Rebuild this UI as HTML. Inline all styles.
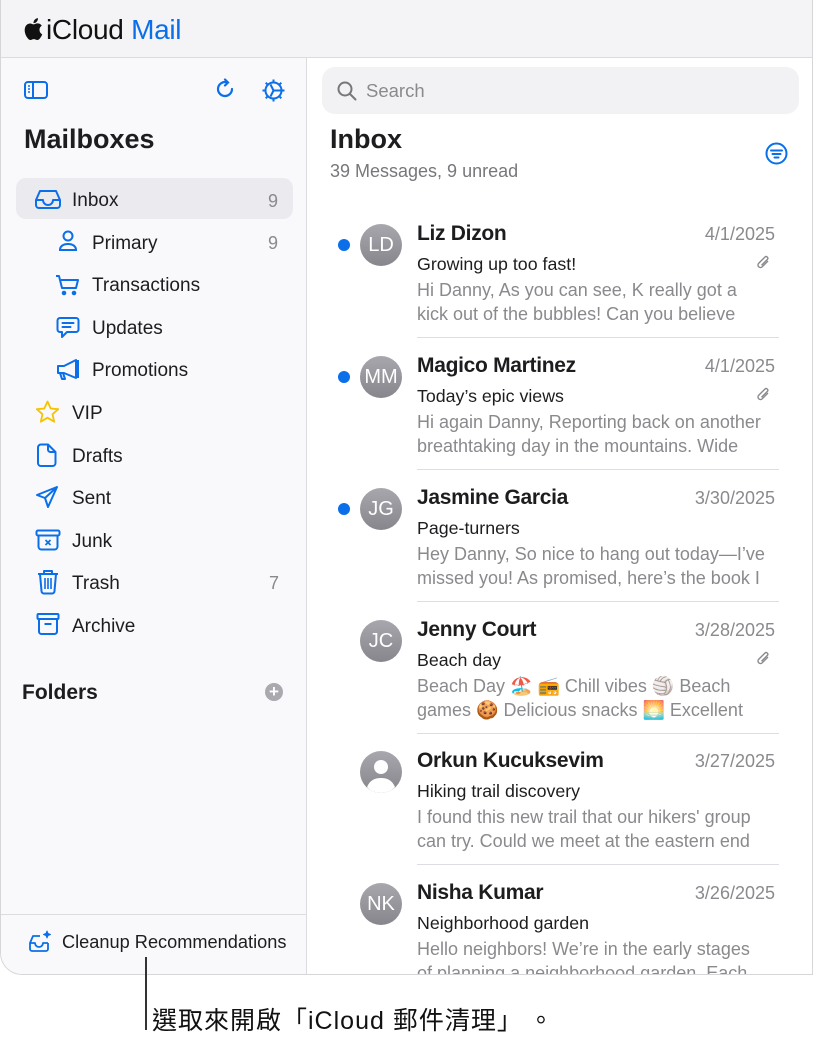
<!DOCTYPE html>
<html><head><meta charset="utf-8"><style>
*{margin:0;padding:0;box-sizing:border-box}
body{width:817px;height:1045px;background:#fff;font-family:"Liberation Sans","Noto Sans CJK TC",sans-serif;position:relative;overflow:hidden;color:#1d1d1f}
.a{position:absolute;white-space:nowrap}
.win{position:absolute;left:0;top:0;width:813px;height:975px;border:1px solid #d6d6d9;border-top:none;border-radius:0 0 0 22px;overflow:hidden;background:#fff}
.hdr{position:absolute;left:0;top:0;width:813px;height:58px;background:#f4f4f6;border-bottom:1px solid #dcdce0}
.side{position:absolute;left:0;top:58px;width:306px;height:917px;background:#f9f9fb;border-right:1px solid #dcdce0}
.si{font-size:19px;color:#1d1d1f}
.cnt{font-size:18px;color:#8a8a8e}
.nm{font-size:21px;font-weight:bold;color:#1d1d1f;letter-spacing:-0.3px}
.dt{font-size:18px;color:#8a8a8e}
.sb{font-size:17.8px;color:#1d1d1f}
.pv{font-size:18px;color:#8a8a8e;line-height:24px}
.av{position:absolute;width:42px;height:42px;border-radius:50%;background:linear-gradient(#a7a7ad,#86868c);color:#fff;font-size:20px;text-align:center;line-height:42px}
.dot{position:absolute;width:12px;height:12px;border-radius:50%;background:#0a6fe8}
.sep{position:absolute;left:416px;width:362px;height:1px;background:#dedee2}
svg{position:absolute}
</style></head><body>
<div class="win">
<div class="hdr"></div>
<svg style="left:22px;top:17px" width="20" height="24" viewBox="0 0 20 24"><path d="M16.5 12.7c0-2.7 2.2-4 2.3-4.1-1.3-1.9-3.300-2.100-4-2.200-1.700-.2-3.300 1-4.200 1-.9 0-2.200-1-3.600-.9C5.200 6.500 3.500 7.600 2.600 9.200.7 12.600 2.100 17.600 4 20.300c.9 1.300 2 2.800 3.400 2.700 1.400-.1 1.900-.9 3.500-.9s2.100.9 3.500.9c1.500 0 2.400-1.300 3.300-2.700 1-1.500 1.500-3 1.500-3.100-.1 0-2.700-1.100-2.700-4.500zM13.800 4.600c.8-.9 1.300-2.200 1.100-3.500-1.100.1-2.400.7-3.200 1.700-.7.800-1.300 2.100-1.200 3.300 1.300.1 2.500-.6 3.300-1.500z" fill="#111"/></svg>
<div class="a" style="left:45px;top:14px;font-size:28px;letter-spacing:-0.3px"><span style="color:#111">iCloud</span> <span style="color:#0a6fe8">Mail</span></div>

<div class="side"></div>
<svg style="left:23px;top:80px" width="24" height="20" viewBox="0 0 24 20" fill="none" stroke="#0a6fe8" stroke-width="2"><rect x="1" y="2" width="22" height="16" rx="3"/><line x1="9" y1="2" x2="9" y2="18"/><path d="M4 6h2M4 9h2M4 12h2" stroke-width="1.5"/></svg>
<svg style="left:213px;top:78px" width="24" height="24" viewBox="0 0 24 24" fill="none" stroke="#0a6fe8" stroke-width="2.2" stroke-linecap="round"><path d="M18 11a7 7 0 1 1-5-6.700"/><path d="M11 1.500l3 3-3 3"/></svg>
<svg style="left:260px;top:78px" width="25" height="25" viewBox="0 0 25 25" fill="none" stroke="#0a6fe8" stroke-width="2"><circle cx="12.500" cy="12.500" r="8"/><path d="M12.500 1.500v3M12.500 20.500v3M1.500 12.500h3M20.500 12.500h3M4.700 4.700l2.100 2.100M18.200 18.200l2.100 2.100M4.700 20.300l2.100-2.100M18.200 6.800l2.100-2.100"/><path d="M9.500 6.500l3 6h8M12.500 12.500l-3 6"/></svg>
<div class="a" style="left:23px;top:124px;font-size:27px;font-weight:bold">Mailboxes</div>
<div class="a" style="left:15px;top:178px;width:277px;height:41px;background:#ebebef;border-radius:10px"></div>
<svg style="left:34px;top:189px" width="26" height="20" viewBox="0 0 26 20" fill="none" stroke="#0a6fe8" stroke-width="2" stroke-linejoin="round"><path d="M1 11l4-9h16l4 9v5a3 3 0 0 1-3 3H4a3 3 0 0 1-3-3z"/><path d="M1 11h7a5 5 0 0 0 10 0h7"/></svg>
<div class="a si" style="left:71px;top:190px">Inbox</div><div class="a cnt" style="left:267px;top:191px">9</div>
<svg style="left:57px;top:230px" width="20" height="22" viewBox="0 0 20 22" fill="none" stroke="#0a6fe8" stroke-width="2"><circle cx="10" cy="6" r="4.500"/><path d="M2 20c0-4 3.500-6 8-6s8 2 8 6z"/></svg>
<div class="a si" style="left:91px;top:233px">Primary</div><div class="a cnt" style="left:267px;top:233px">9</div>
<svg style="left:54px;top:274px" width="25" height="22" viewBox="0 0 25 22" fill="none" stroke="#0a6fe8" stroke-width="2" stroke-linejoin="round"><path d="M1 2h3l3 12h14l2-8H6"/><circle cx="9" cy="19" r="1.300" fill="#0a6fe8"/><circle cx="19" cy="19" r="1.300" fill="#0a6fe8"/></svg>
<div class="a si" style="left:91px;top:275px">Transactions</div>
<svg style="left:55px;top:316px" width="24" height="23" viewBox="0 0 24 23" fill="none" stroke="#0a6fe8" stroke-width="2" stroke-linejoin="round"><path d="M4 2h16a2.500 2.500 0 0 1 2.500 2.500v9A2.500 2.500 0 0 1 20 16H11l-5 5v-5H4a2.500 2.500 0 0 1-2.500-2.500v-9A2.500 2.500 0 0 1 4 2z"/><path d="M6.500 7h11M6.500 11h8" stroke-linecap="round"/></svg>
<div class="a si" style="left:91px;top:318px">Updates</div>
<svg style="left:55px;top:358px" width="25" height="23" viewBox="0 0 25 23" fill="none" stroke="#0a6fe8" stroke-width="2" stroke-linejoin="round"><path d="M2 8h6l12-6v18L8 15H2z"/><path d="M4 15l2 6h3l-2-6"/><line x1="22" y1="2" x2="22" y2="20"/></svg>
<div class="a si" style="left:91px;top:360px">Promotions</div>
<svg style="left:34px;top:400px" width="25" height="24" viewBox="0 0 25 24" fill="none" stroke="#f5c300" stroke-width="1.800" stroke-linejoin="round"><path d="M12.500 1.500l3.200 7 7.500.7-5.700 5 1.700 7.500-6.700-4-6.700 4 1.700-7.500-5.700-5 7.500-.7z"/></svg>
<div class="a si" style="left:71px;top:403px">VIP</div>
<svg style="left:36px;top:443px" width="21" height="24" viewBox="0 0 21 24" fill="none" stroke="#0a6fe8" stroke-width="2" stroke-linejoin="round"><path d="M4 1.500h7l7.500 7.500v11a3 3 0 0 1-3 3H4a3 3 0 0 1-3-3v-15.500a3 3 0 0 1 3-3z"/><path d="M11 1.500v5a2.500 2.500 0 0 0 2.500 2.500h5"/></svg>
<div class="a si" style="left:71px;top:446px">Drafts</div>
<svg style="left:34px;top:485px" width="24" height="24" viewBox="0 0 24 24" fill="none" stroke="#0a6fe8" stroke-width="2" stroke-linejoin="round"><path d="M22 2L2 10l8 3 3 9z"/><path d="M22 2L10 13"/></svg>
<div class="a si" style="left:71px;top:488px">Sent</div>
<svg style="left:34px;top:529px" width="26" height="22" viewBox="0 0 26 22" fill="none" stroke="#0a6fe8" stroke-width="2" stroke-linejoin="round"><rect x="1.500" y="1.500" width="23" height="5" rx="1.500"/><path d="M3.500 6.500v11a3 3 0 0 0 3 3h13a3 3 0 0 0 3-3v-11"/><path d="M10.500 11l5 5M15.500 11l-5 5" stroke-width="1.700"/></svg>
<div class="a si" style="left:71px;top:531px">Junk</div>
<svg style="left:35px;top:569px" width="24" height="26" viewBox="0 0 24 26" fill="none" stroke="#0a6fe8" stroke-width="2" stroke-linejoin="round"><path d="M2 5h20M8 5V2h8v3"/><path d="M4 5l1.500 17a2.500 2.500 0 0 0 2.500 2.500h8a2.500 2.500 0 0 0 2.500-2.500L20 5"/><path d="M9 9v11M12 9v11M15 9v11" stroke-width="1.600"/></svg>
<div class="a si" style="left:71px;top:573px">Trash</div><div class="a cnt" style="left:268px;top:573px">7</div>
<svg style="left:35px;top:612px" width="24" height="24" viewBox="0 0 24 24" fill="none" stroke="#0a6fe8" stroke-width="2" stroke-linejoin="round"><rect x="1.500" y="2" width="21" height="5" rx="1"/><path d="M3 7v12.500a2.500 2.500 0 0 0 2.500 2.500h13a2.500 2.500 0 0 0 2.500-2.500V7"/><path d="M8.500 12h7"/></svg>
<div class="a si" style="left:71px;top:616px">Archive</div>
<div class="a" style="left:21px;top:681px;font-size:21px;font-weight:bold">Folders</div>
<div class="a" style="left:264px;top:683px;width:18px;height:18px;border-radius:50%;background:#a9a9ae;color:#fff;font-size:17px;line-height:18px;text-align:center;font-weight:bold">+</div>
<div class="a" style="left:0;top:914px;width:306px;height:1px;background:#dcdce0"></div>
<svg style="left:27px;top:930px" width="24" height="24" viewBox="0 0 24 24" fill="none" stroke="#0a6fe8" stroke-width="1.800" stroke-linejoin="round"><path d="M12 6H5l-3 7v6a2 2 0 0 0 2 2h14a2 2 0 0 0 2-2v-6"/><path d="M2 13h5a4 4 0 0 0 8 0h5"/><path d="M19 1l1 2.500 2.500 1-2.500 1-1 2.500-1-2.500-2.500-1 2.500-1z" fill="#0a6fe8" stroke-width="1"/></svg>
<div class="a" style="left:61px;top:932px;font-size:18.2px;color:#1d1d1f">Cleanup Recommendations</div>

<div class="a" style="left:321px;top:67px;width:477px;height:47px;background:#f2f2f4;border-radius:13px"></div>
<svg style="left:336px;top:81px" width="20" height="20" viewBox="0 0 20 20" fill="none" stroke="#77777c" stroke-width="2"><circle cx="8" cy="8" r="6.500"/><path d="M13 13l5.500 5.500" stroke-linecap="round"/></svg>
<div class="a" style="left:365px;top:80px;font-size:18.5px;color:#8a8a8e">Search</div>
<div class="a" style="left:329px;top:124px;font-size:27px;font-weight:bold">Inbox</div>
<div class="a" style="left:329px;top:161px;font-size:18px;color:#77777c">39 Messages, 9 unread</div>
<svg style="left:764px;top:142px" width="23" height="23" viewBox="0 0 23 23" fill="none" stroke="#0a6fe8" stroke-width="2"><circle cx="11.500" cy="11.500" r="10"/><path d="M6 8.500h11M7.500 12h8M9.500 15.500h4" stroke-linecap="round"/></svg>

<div class="dot" style="left:337px;top:239px"></div>
<div class="av" style="left:359px;top:224px">LD</div>
<div class="a nm" style="left:416px;top:222px">Liz Dizon</div><div class="a dt" style="right:37px;top:224px">4/1/2025</div>
<div class="a sb" style="left:416px;top:254px">Growing up too fast!</div>
<div class="a pv" style="left:416px;top:278px">Hi Danny, As you can see, K really got a<br>kick out of the bubbles! Can you believe</div>
<div class="sep" style="top:337px"></div>

<div class="dot" style="left:337px;top:371px"></div>
<div class="av" style="left:359px;top:356px">MM</div>
<div class="a nm" style="left:416px;top:354px">Magico Martinez</div><div class="a dt" style="right:37px;top:356px">4/1/2025</div>
<div class="a sb" style="left:416px;top:386px">Today’s epic views</div>
<div class="a pv" style="left:416px;top:410px">Hi again Danny, Reporting back on another<br>breathtaking day in the mountains. Wide</div>
<div class="sep" style="top:469px"></div>

<div class="dot" style="left:337px;top:503px"></div>
<div class="av" style="left:359px;top:488px">JG</div>
<div class="a nm" style="left:416px;top:486px">Jasmine Garcia</div><div class="a dt" style="right:37px;top:488px">3/30/2025</div>
<div class="a sb" style="left:416px;top:518px">Page-turners</div>
<div class="a pv" style="left:416px;top:542px">Hey Danny, So nice to hang out today—I’ve<br>missed you! As promised, here’s the book I</div>
<div class="sep" style="top:601px"></div>

<div class="av" style="left:359px;top:620px">JC</div>
<div class="a nm" style="left:416px;top:618px">Jenny Court</div><div class="a dt" style="right:37px;top:620px">3/28/2025</div>
<div class="a sb" style="left:416px;top:650px">Beach day</div>
<div class="a pv" style="left:416px;top:674px">Beach Day 🏖️ 📻 Chill vibes 🏐 Beach<br>games 🍪 Delicious snacks 🌅 Excellent</div>
<div class="sep" style="top:733px"></div>

<div class="av" style="left:359px;top:751px;overflow:hidden"><svg style="left:0;top:0" width="42" height="42" viewBox="0 0 42 42"><circle cx="21" cy="16" r="7" fill="#fff"/><path d="M7 36c3-7 8-9 14-9s11 2 14 9a18 18 0 0 1-28 0z" fill="#fff"/></svg></div>
<div class="a nm" style="left:416px;top:749px">Orkun Kucuksevim</div><div class="a dt" style="right:37px;top:751px">3/27/2025</div>
<div class="a sb" style="left:416px;top:781px">Hiking trail discovery</div>
<div class="a pv" style="left:416px;top:805px">I found this new trail that our hikers' group<br>can try. Could we meet at the eastern end</div>
<div class="sep" style="top:864px"></div>

<div class="av" style="left:359px;top:883px">NK</div>
<div class="a nm" style="left:416px;top:881px">Nisha Kumar</div><div class="a dt" style="right:37px;top:883px">3/26/2025</div>
<div class="a sb" style="left:416px;top:913px">Neighborhood garden</div>
<div class="a pv" style="left:416px;top:937px">Hello neighbors! We’re in the early stages<br>of planning a neighborhood garden. Each</div>

<svg style="left:754px;top:255px" width="16" height="16" viewBox="0 0 16 16" fill="none" stroke="#8a8a8e" stroke-width="1.400"><path d="M13 6l-6 6a2.500 2.500 0 0 1-3.500-3.500l6.500-6.500a1.700 1.700 0 0 1 2.400 2.400L6.500 10.300"/></svg>
<svg style="left:754px;top:387px" width="16" height="16" viewBox="0 0 16 16" fill="none" stroke="#8a8a8e" stroke-width="1.400"><path d="M13 6l-6 6a2.500 2.500 0 0 1-3.500-3.500l6.500-6.500a1.700 1.700 0 0 1 2.400 2.400L6.500 10.300"/></svg>
<svg style="left:754px;top:651px" width="16" height="16" viewBox="0 0 16 16" fill="none" stroke="#8a8a8e" stroke-width="1.400"><path d="M13 6l-6 6a2.500 2.500 0 0 1-3.500-3.500l6.500-6.500a1.700 1.700 0 0 1 2.400 2.400L6.500 10.300"/></svg>
</div>
<div class="a" style="left:145px;top:957px;width:1.500px;height:73px;background:#333"></div>
<div class="a" style="left:152px;top:1001px;font-size:25px;color:#111;letter-spacing:1px">選取來開啟「iCloud 郵件清理」<span style="margin-left:18px">。</span></div>
</body></html>
